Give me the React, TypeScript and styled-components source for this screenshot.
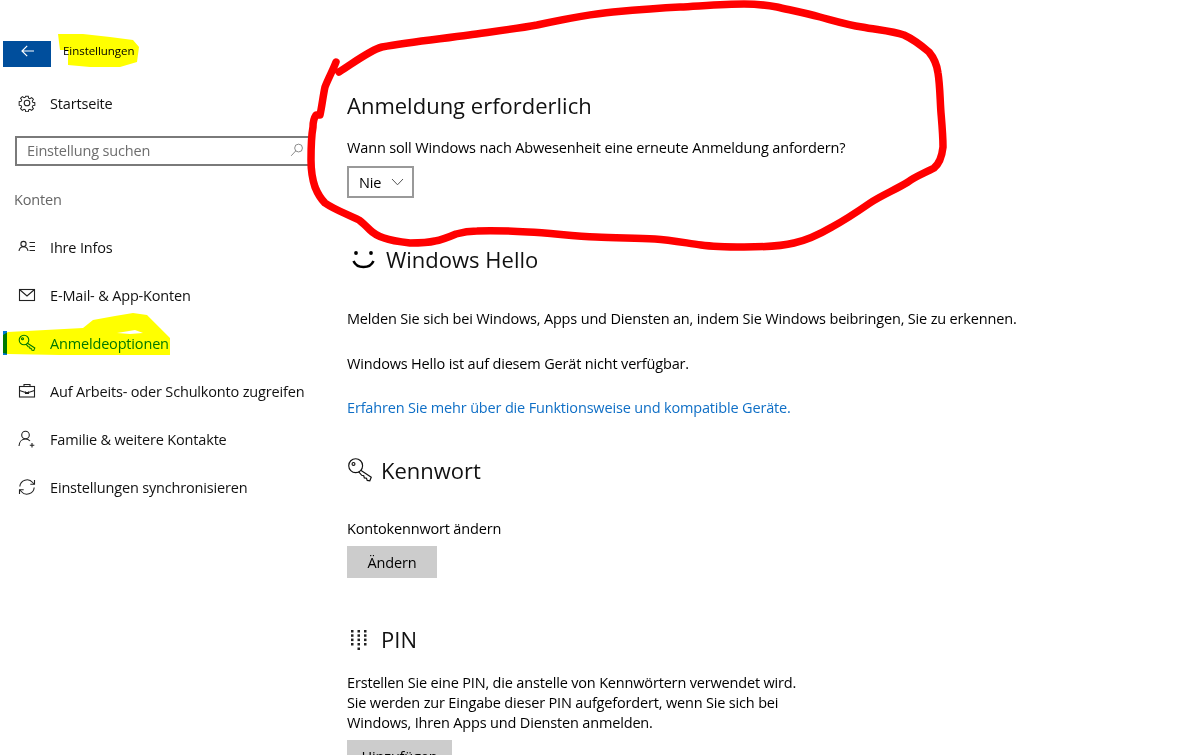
import styled, { createGlobalStyle } from 'styled-components'

const GlobalStyle = createGlobalStyle`
	html, body {
		margin: 0;
		padding: 0;
		background: #fff;
	}
	* {
		box-sizing: border-box;
	}
`

function Icon({ children, size = 18, stroke = 1.1 }: { children: React.ReactNode; size?: number; stroke?: number }) {
	return (
		<svg width={size} height={size} viewBox="0 0 18 18" fill="none" stroke="currentColor" strokeWidth={stroke}>
			{children}
		</svg>
	)
}

const GearIcon = () => (
	<Icon>
		<circle cx="9" cy="9" r="2.8" />
		<path d="M7.6 1.5h2.8l.4 2.2 1.4.6 1.9-1.3 2 2-1.3 1.9.6 1.4 2.2.4v2.8l-2.2.4-.6 1.4 1.3 1.9-2 2-1.9-1.3-1.4.6-.4 2.2H7.6l-.4-2.2-1.4-.6-1.9 1.3-2-2 1.3-1.9-.6-1.4-2.2-.4V7.6l2.2-.4.6-1.4-1.3-1.9 2-2 1.9 1.3 1.4-.6z" transform="translate(.8 .8) scale(.91)" />
	</Icon>
)

const InfoIcon = () => (
	<Icon>
		<circle cx="5.5" cy="6" r="2.6" />
		<path d="M1 13c.3-2.6 2-4.3 4.5-4.3S9.700 10.400 10 13" />
		<path d="M11.500 4.500H17M11.500 8.500H17M11.500 12.500H17" />
	</Icon>
)

const MailIcon = () => (
	<Icon>
		<rect x="1.500" y="3.500" width="15" height="11" />
		<path d="M1.500 3.500 9 10l7.500-6.500" />
	</Icon>
)

const KeyIcon = ({ size = 18, stroke = 1.1 }: { size?: number; stroke?: number }) => (
	<Icon size={size} stroke={stroke}>
		<circle cx="6" cy="6" r="4.800" />
		<circle cx="4.500" cy="4.800" r="1" />
		<path d="M9.500 9.200 16.800 14l-1 2.500-1.800-.3-.5-1.500-1.500-.2-.4-1.500-1.400-.3-2.200-2.500" />
	</Icon>
)

const BriefcaseIcon = () => (
	<Icon>
		<rect x="1.500" y="4.500" width="15" height="10.500" />
		<path d="M6 4.500V2.500h6v2M1.500 8.500 7.500 10.500h3l6-2M7.500 9.500v2h3v-2" />
	</Icon>
)

const FamilyIcon = () => (
	<Icon>
		<circle cx="7.500" cy="5" r="3.800" />
		<path d="M1 16c.2-4 2.800-7 6.500-7 2 0 3.500.8 4.500 2" />
		<path d="M14 13v4.500M11.800 15.300h4.500" />
	</Icon>
)

const SyncIcon = () => (
	<Icon>
		<path d="M1.800 8.500A7.300 7.300 0 0 1 14.700 4.500L16 6" />
		<path d="M16.500 2v4.200h-4.200" />
		<path d="M16.200 9.500A7.300 7.300 0 0 1 3.300 13.500L2 12" />
		<path d="M1.500 16v-4.200h4.200" />
	</Icon>
)

const SearchIcon = () => (
	<Icon size={14}>
		<circle cx="11" cy="6.500" r="5" />
		<path d="M7.500 10 1.500 16.500" />
	</Icon>
)

const BackIcon = () => (
	<svg width="13" height="12" viewBox="0 0 13 12" fill="none" stroke="#fff" strokeWidth="1.200">
		<path d="M13 6H1M6.200.8 1 6l5.200 5.200" />
	</svg>
)

const ChevronIcon = () => (
	<svg width="13" height="8" viewBox="0 0 13 8" fill="none" stroke="#555" strokeWidth="1">
		<path d="M1 1l5.500 5.800L12 1" />
	</svg>
)

const SmileIcon = () => (
	<svg width="30" height="24" viewBox="0 0 30 24" fill="none" stroke="#000">
		<circle cx="9" cy="6" r="1.900" fill="#000" stroke="none" />
		<circle cx="24" cy="6" r="1.900" fill="#000" stroke="none" />
		<path d="M6.500 14c1.500 3.500 5 6 10 6s8.500-2.500 10-6" strokeWidth="2.500" />
	</svg>
)

const PinIcon = () => (
	<svg width="24" height="24" viewBox="0 0 24 24" fill="#222">
		{[3, 7.300, 11.600, 16].map(y =>
			[4, 10.500, 17].map(x => <rect key={`${x}-${y}`} x={x} y={y} width="2.500" height="2.500" />)
		)}
		<rect x="10.500" y="20.500" width="2.500" height="2.500" />
	</svg>
)

const navItems = [
	{ label: 'Ihre Infos', icon: <InfoIcon /> },
	{ label: 'E-Mail- & App-Konten', icon: <MailIcon /> },
	{ label: 'Anmeldeoptionen', icon: <KeyIcon />, active: true },
	{ label: 'Auf Arbeits- oder Schulkonto zugreifen', icon: <BriefcaseIcon /> },
	{ label: 'Familie & weitere Kontakte', icon: <FamilyIcon /> },
	{ label: 'Einstellungen synchronisieren', icon: <SyncIcon /> },
]

export default function App() {
	return (
		<Page>
			<GlobalStyle />
			<Sidebar>
				<Header>
					<BackButton aria-label="Zurück">
						<BackIcon />
					</BackButton>
					<AppTitle>Einstellungen</AppTitle>
				</Header>
				<HomeRow>
					<IconSlot>
						<GearIcon />
					</IconSlot>
					Startseite
				</HomeRow>
				<SearchBox>
					<SearchPlaceholder>Einstellung suchen</SearchPlaceholder>
					<SearchIcon />
				</SearchBox>
				<GroupLabel>Konten</GroupLabel>
				<nav>
					{navItems.map(item => (
						<NavRow key={item.label} $active={item.active}>
							<IconSlot>{item.icon}</IconSlot>
							{item.label}
						</NavRow>
					))}
				</nav>
			</Sidebar>

			<Main>
				<Title>Anmeldung erforderlich</Title>
				<Label>Wann soll Windows nach Abwesenheit eine erneute Anmeldung anfordern?</Label>
				<Select>
					Nie
					<ChevronIcon />
				</Select>

				<SectionHeading $gap={47}>
					<SectionIcon $width={39}>
						<SmileIcon />
					</SectionIcon>
					Windows Hello
				</SectionHeading>
				<Text $gap={34}>
					Melden Sie sich bei Windows, Apps und Diensten an, indem Sie Windows beibringen, Sie zu erkennen.
				</Text>
				<Text $gap={25}>Windows Hello ist auf diesem Gerät nicht verfügbar.</Text>
				<LinkText href="#">Erfahren Sie mehr über die Funktionsweise und kompatible Geräte.</LinkText>

				<SectionHeading $gap={38}>
					<SectionIcon $width={34}>
						<KeyIcon size={26} stroke={0.8} />
					</SectionIcon>
					Kennwort
				</SectionHeading>
				<Text $gap={33}>Kontokennwort ändern</Text>
				<Button $width={90}>Ändern</Button>

				<SectionHeading $gap={47}>
					<SectionIcon $width={34}>
						<PinIcon />
					</SectionIcon>
					PIN
				</SectionHeading>
				<Text $gap={18}>
					Erstellen Sie eine PIN, die anstelle von Kennwörtern verwendet wird.
					<br />
					Sie werden zur Eingabe dieser PIN aufgefordert, wenn Sie sich bei
					<br />
					Windows, Ihren Apps und Diensten anmelden.
				</Text>
				<Button $width={105}>Hinzufügen</Button>
			</Main>

			<MarkerLayer viewBox="0 0 1178 755">
				<path
					fill="#ffff00"
					d="M58 34 60 50 68 50 68 65 90 67 120 67 137 62 139 47 133 40 110 37 83 34Z"
				/>
				<path
					fill="#ffff00"
					fillRule="evenodd"
					d="M3 335 8 332 83 328 93 320 115 316 133 313 147 315 160 328 170 338 170 355 60 355 8 354 3 353ZM117 333 135 330 143 333 130 334Z"
				/>
			</MarkerLayer>
			<PenLayer viewBox="0 0 1178 755">
				<path
					fill="none"
					stroke="#ff0000"
					strokeWidth="7.500"
					strokeLinecap="round"
					strokeLinejoin="round"
					d="M339 72 C352 64 370 50 382 47 C410 42 440 39 469 35 C490 32 515 29 537 25 C565 19 590 14 613 12 C635 10 660 8 680 7 C700 6 725 4 744 4 C755 4 766 5 777 7 C790 10 805 13 820 17 C835 21 848 25 862 27 C878 30 892 31 904 35 C915 40 922 46 929 52 C934 58 937 65 938 73 C940 85 940 100 941 113 C942 125 943 136 943 147 C942 156 939 164 934 168 C925 173 916 176 908 182 C895 190 882 195 870 203 C857 212 845 220 832 227 C820 234 808 240 794 243 C778 247 760 247 744 247 C730 247 715 247 701 245 C686 243 670 240 655 239 C635 238 615 238 596 237 C573 236 550 233 528 232 C511 231 493 230 477 231 C469 231 463 232 456 234 C449 237 442 240 435 241 C427 243 418 243 410 243 C401 242 392 241 384 238 C378 236 373 233 370 230 C366 226 363 223 359 220 C347 214 335 210 325 203 C320 198 317 192 315 187 C312 178 311 169 311 160 C311 149 311 138 313 127 C313 122 314 118 316 115 L320 115 C322 106 323 96 325 87 C328 79 333 70 336 62"
				/>
			</PenLayer>
		</Page>
	)
}

const Page = styled.div`
	position: relative;
	width: 1178px;
	height: 755px;
	overflow: hidden;
	display: flex;
	background: #fff;
	color: #000;
	font-family: 'Open Sans', 'Liberation Sans', sans-serif;
	font-size: 14.5px;
	letter-spacing: -0.17px;
`

const Sidebar = styled.aside`
	width: 347px;
	flex: none;
	padding-top: 41px;
`

const Header = styled.header`
	height: 26px;
	display: flex;
	align-items: center;
	padding-left: 3px;
`

const BackButton = styled.button`
	width: 48px;
	height: 26px;
	padding: 0 0 7px;
	border: 0;
	background: #004e9c;
	display: flex;
	align-items: center;
	justify-content: center;
`

const AppTitle = styled.span`
	margin-left: 12px;
	padding-bottom: 8px;
	font-size: 11.5px;
	letter-spacing: -0.05px;
`

const HomeRow = styled.div`
	height: 48px;
	margin-top: 13px;
	padding-bottom: 2px;
	display: flex;
	align-items: center;
	color: #111;
`

const IconSlot = styled.span`
	width: 50px;
	flex: none;
	display: flex;
	padding-left: 18px;
	color: #222;
`

const SearchBox = styled.div`
	width: 297px;
	height: 30px;
	margin: 8px 0 0 15px;
	padding: 0 6px 2px 10px;
	border: 2px solid #7a7a7a;
	display: flex;
	align-items: center;
	justify-content: space-between;
	color: #777;
`

const SearchPlaceholder = styled.span`
	color: #6d6d6d;
`

const GroupLabel = styled.div`
	height: 20px;
	line-height: 20px;
	margin: 24px 0 14px 14px;
	color: #666;
`

const NavRow = styled.div<{ $active?: boolean }>`
	position: relative;
	height: 48px;
	padding-bottom: 2px;
	display: flex;
	align-items: center;
	color: ${p => (p.$active ? '#0078d7' : '#111')};

	${IconSlot} {
		color: ${p => (p.$active ? '#0078d7' : '#222')};
	}

	&::before {
		content: '';
		display: ${p => (p.$active ? 'block' : 'none')};
		position: absolute;
		left: 3px;
		top: 11px;
		width: 4px;
		height: 24px;
		background: #0078d7;
	}
`

const Main = styled.main`
	flex: 1;
	min-width: 0;
	padding-top: 90px;
`

const Title = styled.h1`
	margin: 0;
	font-size: 22px;
	font-weight: 400;
	line-height: 30px;
	letter-spacing: 0;
	color: #111;
`

const Label = styled.div`
	margin-top: 18px;
	line-height: 20px;
	letter-spacing: -0.15px;
`

const Select = styled.div`
	width: 67px;
	height: 32px;
	margin-top: 8px;
	padding: 0 8px 0 10px;
	border: 2px solid #999;
	display: flex;
	align-items: center;
	justify-content: space-between;
`

const SectionHeading = styled.h2<{ $gap: number }>`
	margin: ${p => p.$gap}px 0 0;
	height: 30px;
	padding-bottom: 2px;
	display: flex;
	align-items: center;
	font-size: 22px;
	font-weight: 400;
	letter-spacing: 0;
	color: #111;
`

const SectionIcon = styled.span<{ $width: number }>`
	width: ${p => p.$width}px;
	flex: none;
	display: flex;
	align-items: center;
`

const Text = styled.p<{ $gap: number }>`
	margin: ${p => p.$gap}px 0 0;
	line-height: 20px;
`

const LinkText = styled.a`
	display: block;
	margin-top: 24px;
	line-height: 20px;
	color: #0f6fc6;
	text-decoration: none;
`

const Button = styled.button<{ $width: number }>`
	display: block;
	width: ${p => p.$width}px;
	height: 32px;
	margin-top: 7px;
	padding: 0;
	border: 0;
	background: #cccccc;
	color: #000;
	font: inherit;
	letter-spacing: inherit;
`

const MarkerLayer = styled.svg`
	position: absolute;
	inset: 0;
	width: 1178px;
	height: 755px;
	mix-blend-mode: multiply;
	pointer-events: none;
`

const PenLayer = styled.svg`
	position: absolute;
	inset: 0;
	width: 1178px;
	height: 755px;
	pointer-events: none;
`
